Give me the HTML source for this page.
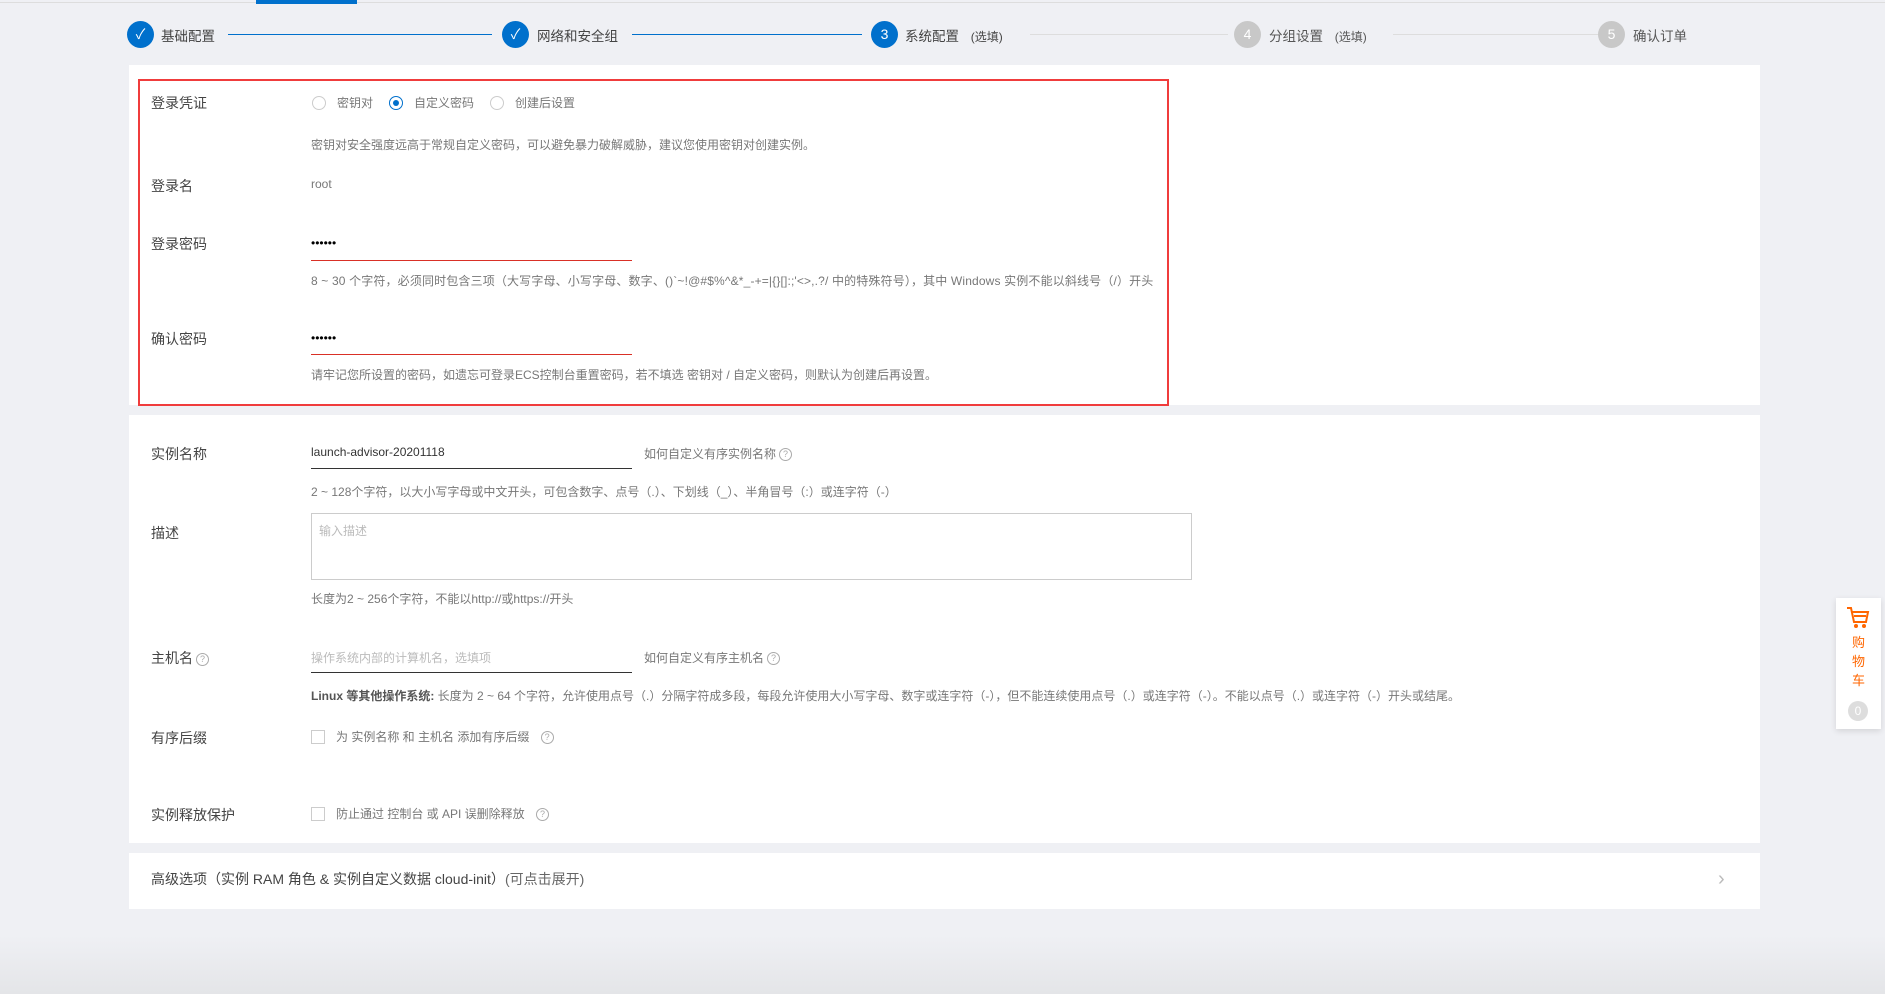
<!DOCTYPE html><html><head><meta charset="utf-8"><style>
*{margin:0;padding:0;box-sizing:border-box}
body{width:1885px;height:994px;background:#eff0f4;font-family:"Liberation Sans","Noto Sans CJK SC",sans-serif;color:#333;position:relative;overflow:hidden}
.a{position:absolute;white-space:nowrap}
.lbl{font-size:14px;color:#444}
.h{font-size:12px;color:#777}
.panel{position:absolute;left:129px;width:1631px;background:#fff}
.c{position:absolute;width:27px;height:27px;border-radius:50%;background:#0070cc;color:#fff;font-size:14px;text-align:center;line-height:27px}
.g{background:#c8c8c8}
.ln{position:absolute;height:1px;top:34px}
.st{font-size:13.5px;top:25px;color:#444}
.r{width:14px;height:14px;border:1px solid #ccc;border-radius:50%;position:absolute}
.q{display:inline-block;width:13px;height:13px;border:1px solid #aaa;border-radius:50%;font-size:9px;line-height:11px;text-align:center;color:#aaa;vertical-align:1px;margin-left:3px}
.cb{position:absolute;width:14px;height:14px;border:1px solid #ccc}
</style></head><body>
<div class="a" style="left:0;top:2px;width:1885px;height:1px;background:#ddd"></div>
<div class="a" style="left:256px;top:0;width:101px;height:4px;background:#0070cc"></div>
<div class="c" style="left:127px;top:21px">✓</div><div class="a st" style="left:161px">基础配置</div>
<div class="ln" style="left:228px;width:264px;background:#0070cc"></div>
<div class="c" style="left:502px;top:21px">✓</div><div class="a st" style="left:537px">网络和安全组</div>
<div class="ln" style="left:632px;width:230px;background:#0070cc"></div>
<div class="c" style="left:871px;top:21px">3</div><div class="a st" style="left:905px">系统配置 <span style="font-size:12px;margin-left:8px">(选填)</span></div>
<div class="ln" style="left:1030px;width:198px;background:#ddd"></div>
<div class="c g" style="left:1234px;top:21px">4</div><div class="a st" style="left:1269px;color:#555">分组设置 <span style="font-size:12px;margin-left:8px">(选填)</span></div>
<div class="ln" style="left:1393px;width:205px;background:#ddd"></div>
<div class="c g" style="left:1598px;top:21px">5</div><div class="a st" style="left:1633px;color:#555">确认订单</div>

<div class="panel" style="top:65px;height:340px"></div>
<div class="a" style="left:138px;top:79px;width:1031px;height:327px;border:2px solid #f03c3c"></div>
<div class="a lbl" style="left:151px;top:93px">登录凭证</div>
<div class="r" style="left:312px;top:96px"></div><div class="a h" style="left:337px;top:94px">密钥对</div>
<div class="r" style="left:389px;top:96px;border-color:#0070cc"><div style="position:absolute;left:3px;top:3px;width:6px;height:6px;border-radius:50%;background:#0070cc"></div></div><div class="a h" style="left:414px;top:94px">自定义密码</div>
<div class="r" style="left:490px;top:96px"></div><div class="a h" style="left:515px;top:94px">创建后设置</div>
<div class="a h" style="left:311px;top:136px">密钥对安全强度远高于常规自定义密码，可以避免暴力破解威胁，建议您使用密钥对创建实例。</div>
<div class="a lbl" style="left:151px;top:176px">登录名</div>
<div class="a h" style="left:311px;top:177px">root</div>
<div class="a lbl" style="left:151px;top:234px">登录密码</div>
<div class="a" style="left:311px;top:236px;font-size:12px;color:#000">••••••</div>
<div class="a" style="left:311px;top:260px;width:321px;height:1px;background:#d93026"></div>
<div class="a h" style="left:311px;top:272px;letter-spacing:0.15px">8 ~ 30 个字符，必须同时包含三项（大写字母、小写字母、数字、()`~!@#$%^&amp;*_-+=|{}[]:;'&lt;&gt;,.?/ 中的特殊符号），其中 Windows 实例不能以斜线号（/）开头</div>
<div class="a lbl" style="left:151px;top:329px">确认密码</div>
<div class="a" style="left:311px;top:331px;font-size:12px;color:#000">••••••</div>
<div class="a" style="left:311px;top:354px;width:321px;height:1px;background:#d93026"></div>
<div class="a h" style="left:311px;top:366px">请牢记您所设置的密码，如遗忘可登录ECS控制台重置密码，若不填选 密钥对 / 自定义密码，则默认为创建后再设置。</div>

<div class="panel" style="top:415px;height:428px"></div>
<div class="a lbl" style="left:151px;top:444px">实例名称</div>
<div class="a" style="left:311px;top:445px;font-size:12px;color:#333">launch-advisor-20201118</div>
<div class="a" style="left:311px;top:468px;width:321px;height:1px;background:#333"></div>
<div class="a h" style="left:644px;top:445px">如何自定义有序实例名称<span class="q">?</span></div>
<div class="a h" style="left:311px;top:483px">2 ~ 128个字符，以大小写字母或中文开头，可包含数字、点号（.）、下划线（_）、半角冒号（:）或连字符（-）</div>
<div class="a lbl" style="left:151px;top:523px">描述</div>
<div class="a" style="left:311px;top:513px;width:881px;height:67px;border:1px solid #ccc"><span style="position:absolute;left:7px;top:8px;font-size:12px;color:#bbb">输入描述</span></div>
<div class="a h" style="left:311px;top:590px">长度为2 ~ 256个字符，不能以http://或https://开头</div>
<div class="a lbl" style="left:151px;top:648px">主机名<span class="q">?</span></div>
<div class="a" style="left:311px;top:649px;font-size:12px;color:#bbb">操作系统内部的计算机名，选填项</div>
<div class="a" style="left:311px;top:672px;width:321px;height:1px;background:#333"></div>
<div class="a h" style="left:644px;top:649px">如何自定义有序主机名<span class="q">?</span></div>
<div class="a h" style="left:311px;top:687px"><b style="color:#555">Linux 等其他操作系统:</b> 长度为 2 ~ 64 个字符，允许使用点号（.）分隔字符成多段，每段允许使用大小写字母、数字或连字符（-），但不能连续使用点号（.）或连字符（-）。不能以点号（.）或连字符（-）开头或结尾。</div>
<div class="a lbl" style="left:151px;top:728px">有序后缀</div>
<div class="cb" style="left:311px;top:730px"></div>
<div class="a h" style="left:336px;top:728px">为 实例名称 和 主机名 添加有序后缀 <span class="q" style="margin-left:8px">?</span></div>
<div class="a lbl" style="left:151px;top:805px">实例释放保护</div>
<div class="cb" style="left:311px;top:807px"></div>
<div class="a h" style="left:336px;top:805px">防止通过 控制台 或 API 误删除释放 <span class="q" style="margin-left:8px">?</span></div>

<div class="panel" style="top:853px;height:56px"></div>
<div class="a" style="left:151px;top:869px;font-size:14px;color:#444">高级选项（实例 RAM 角色 &amp; 实例自定义数据 cloud-init）<span style="color:#666">(可点击展开)</span></div>
<div class="a" style="left:1718px;top:868px;font-size:20px;color:#bbb">›</div>
<div class="a" style="left:0;top:935px;width:1885px;height:59px;background:linear-gradient(#eff0f4,#e4e5e8)"></div>

<div class="a" style="left:1836px;top:598px;width:45px;height:131px;background:#fff;box-shadow:0 2px 6px rgba(0,0,0,.12)">
<svg style="position:absolute;left:10px;top:8px" width="25" height="24" viewBox="0 0 25 24"><path d="M1 2h4l3 14h12l2-10H6M8 10h12" fill="none" stroke="#f60" stroke-width="2"/><circle cx="10" cy="20" r="2" fill="#f60"/><circle cx="18" cy="20" r="2" fill="#f60"/></svg>
<div style="position:absolute;left:0;top:35px;width:45px;text-align:center;font-size:13px;color:#f60;line-height:19px">购<br>物<br>车</div>
<div style="position:absolute;left:12px;top:103px;width:20px;height:20px;border-radius:50%;background:#ddd;color:#fff;font-size:12px;text-align:center;line-height:20px">0</div>
</div>
</body></html>
